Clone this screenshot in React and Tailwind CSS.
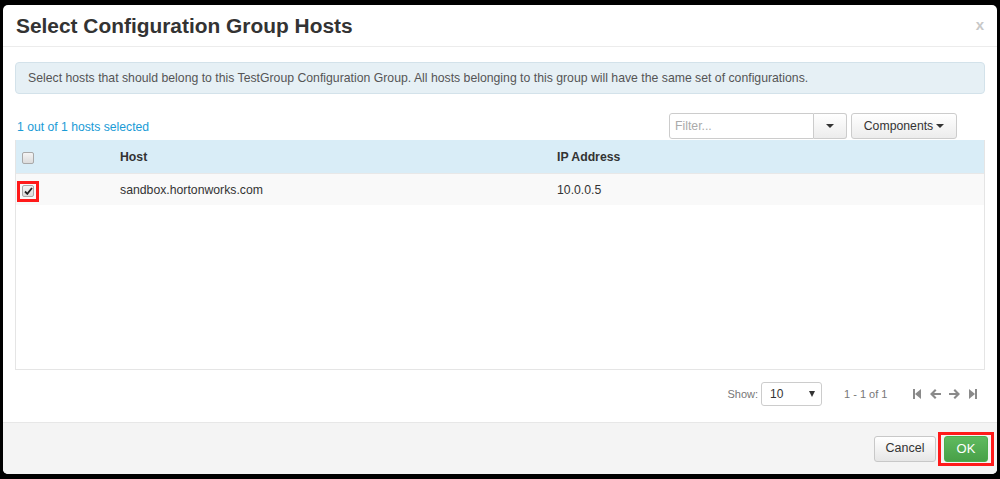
import React from "react";

const font = { fontFamily: '"Liberation Sans", Arial, sans-serif' };

const FirstIcon = () => (
  <svg width="9" height="10" viewBox="0 0 9 10" fill="#8a8a8a">
    <rect x="0" y="0" width="2" height="10" />
    <path d="M2 5 L8 0 L8 10 Z" />
  </svg>
);
const LastIcon = () => (
  <svg width="9" height="10" viewBox="0 0 9 10" fill="#8a8a8a">
    <rect x="7" y="0" width="2" height="10" />
    <path d="M7 5 L1 0 L1 10 Z" />
  </svg>
);
const PrevIcon = () => (
  <svg width="11" height="10" viewBox="0 0 11 10" fill="#8a8a8a">
    <path d="M0 5 L5 0 L6.5 1.5 L4 4 L11 4 L11 6 L4 6 L6.5 8.5 L5 10 Z" />
  </svg>
);
const NextIcon = () => (
  <svg width="11" height="10" viewBox="0 0 11 10" fill="#8a8a8a">
    <path d="M11 5 L6 0 L4.5 1.5 L7 4 L0 4 L0 6 L7 6 L4.5 8.5 L6 10 Z" />
  </svg>
);

const Caret = () => (
  <span className="inline-block w-0 h-0 border-l-[4px] border-r-[4px] border-t-[4px] border-l-transparent border-r-transparent border-t-[#333]" />
);

const Checkbox = ({ checked }) => (
  <span className="inline-flex items-center justify-center w-[12px] h-[12px] rounded-[2px] border border-[#a9a9a9] bg-gradient-to-b from-[#f4f4f4] to-[#dcdcdc]">
    {checked && (
      <svg width="9" height="8" viewBox="0 0 9 8">
        <path d="M1 4.5 L3.3 6.8 L8 1" stroke="#222" strokeWidth="1.8" fill="none" />
      </svg>
    )}
  </span>
);

export default function App() {
  return (
    <div className="w-[1000px] h-[479px] bg-black pt-[5px] pl-[3px] pr-[3px] overflow-hidden" style={font}>
      <div className="h-[469px] w-[994px] bg-white rounded-[5px] flex flex-col overflow-hidden">
        {/* header */}
        <div className="h-[42px] shrink-0 border-b border-[#ececec] flex items-center justify-between pl-[13px] pr-[13px]">
          <h3 className="text-[20.9px] font-bold text-[#333]">Select Configuration Group Hosts</h3>
          <span className="text-[15px] text-[#c8c8c8] font-bold">x</span>
        </div>

        {/* body */}
        <div className="flex-1 px-[12px] pt-[15px]">
          <div className="h-[32px] rounded-[4px] border border-[#d3e2ea] bg-[#e6f0f5] flex items-center pl-[12px] text-[12.25px] text-[#555]">
            Select hosts that should belong to this TestGroup Configuration Group. All hosts belonging to this group will have the same set of configurations.
          </div>

          <div className="mt-[19px] h-[26px] flex items-center justify-between pr-[28px]">
            <span className="pl-[2px] pt-[2px] text-[12.2px] text-[#1a9bd6]">1 out of 1 hosts selected</span>
            <div className="flex items-center h-[26px]">
              <div className="flex h-[26px]">
                <input
                  className="w-[145px] h-[26px] border border-[#ccc] rounded-l-[3px] px-[5px] text-[12.25px] text-[#555] placeholder-[#aaa] outline-none"
                  style={font}
                  placeholder="Filter..."
                  readOnly
                />
                <div className="w-[33px] h-[26px] border border-l-0 border-[#ccc] rounded-r-[3px] bg-gradient-to-b from-white to-[#ececec] flex items-center justify-center">
                  <Caret />
                </div>
              </div>
              <div className="ml-[4px] w-[106px] h-[26px] border border-[#ccc] rounded-[3px] bg-gradient-to-b from-white to-[#ececec] flex items-center justify-center gap-[3px] text-[12.25px] text-[#333]">
                Components <Caret />
              </div>
            </div>
          </div>

          {/* table */}
          <div className="mt-px h-[230px] border border-[#e5e5e5] border-t-0">
            <div className="h-[33px] bg-[#d9edf7] flex items-center text-[12.25px] font-bold text-[#333]">
              <div className="w-[104px] pl-[6px] pt-[3px] flex items-center"><Checkbox /></div>
              <div className="w-[437px] pt-[2px]">Host</div>
              <div className="pt-[2px]">IP Address</div>
            </div>
            <div className="h-[32px] bg-[#f9f9f9] border-t border-[#e8e8e8] flex items-center text-[12.25px] text-[#333]">
              <div className="w-[104px] pl-[1px] pt-[3px] flex items-center">
                <span className="w-[22px] h-[21px] border-[3px] border-[#ff1a1a] flex items-center justify-center">
                  <Checkbox checked />
                </span>
              </div>
              <div className="w-[437px] pt-[2px]">sandbox.hortonworks.com</div>
              <div className="pt-[2px]">10.0.0.5</div>
            </div>
          </div>

          {/* pagination */}
          <div className="mt-[12px] h-[24px] flex items-center justify-end pr-[8px] text-[11px] text-[#777]">
            <span>Show:</span>
            <div className="ml-[3px] w-[61px] h-[24px] border border-[#ccc] rounded-[3px] flex items-center justify-between pl-[8px] pr-[6px] text-[12px] text-[#333]">
              <span>10</span>
              <span className="inline-block w-0 h-0 border-l-[3.5px] border-r-[3.5px] border-t-[6px] border-l-transparent border-r-transparent border-t-[#333]" />
            </div>
            <span className="ml-[22px] w-[69px]">1 - 1 of 1</span>
            <div className="flex items-center gap-[8px]">
              <FirstIcon />
              <PrevIcon />
              <NextIcon />
              <LastIcon />
            </div>
          </div>
        </div>

        {/* footer */}
        <div className="h-[52px] shrink-0 bg-[#f4f4f4] border-t border-[#e7e7e7] flex items-center justify-end pr-[3px]">
          <button className="w-[62px] h-[26px] border border-[#c8c8c8] rounded-[3px] bg-gradient-to-b from-white to-[#e6e6e6] text-[12.5px] text-[#333]" style={font}>
            Cancel
          </button>
          <span className="ml-[2px] w-[56px] h-[34px] border-[3px] border-[#ff1a1a] flex items-center justify-center">
            <button className="w-[44px] h-[26px] rounded-[3px] border border-[#4cae4c] bg-gradient-to-b from-[#5fba5f] to-[#48a048] text-[13px] text-white" style={font}>
              OK
            </button>
          </span>
        </div>
      </div>
    </div>
  );
}
